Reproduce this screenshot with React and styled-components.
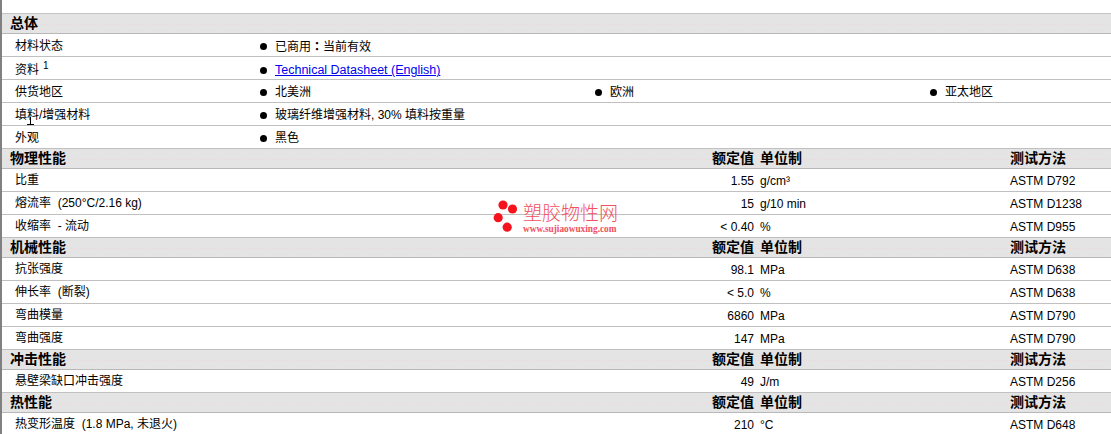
import React from 'react';
import styled, { createGlobalStyle } from 'styled-components';

const Global = createGlobalStyle`
	html, body { margin: 0; padding: 0; background: #fff; }
	body { font-family: "Liberation Sans", "Noto Sans CJK SC", sans-serif; font-size: 12px; color: #000; }
`;

const Page = styled.div`
	position: relative;
	width: 1111px;
	height: 434px;
	overflow: hidden;
	box-sizing: border-box;
	border-left: 2px solid #808080;
	padding-top: 13px;
`;

const Head = styled.div`
	display: grid;
	grid-template-columns: 600px 152px 256px 1fr;
	height: 19px;
	line-height: 19px;
	background-color: #e4e4e4;
	background-image: linear-gradient(90deg, #f0d4d8 50%, transparent 50%);
	background-size: 3px 1px;
	background-position: 0 10px;
	background-repeat: repeat-x;
	border-bottom: 1px solid #b8b8b8;
	border-top: ${p => (p.$first ? '1px solid #c4c4c4' : 'none')};
	font-weight: bold;
	font-size: 14px;
`;

const HeadTitle = styled.span`
	padding-left: 8px;
`;

const Row = styled.div`
	display: grid;
	grid-template-columns: ${p => p.$columns};
	height: 22px;
	line-height: ${p => p.$lineHeight || 22}px;
	border-bottom: 1px solid #c0c0c0;
`;

const Label = styled.span`
	padding-left: 13px;
`;

const Value = styled.span`
	text-align: right;
	padding-top: 1px;
`;

const Unit = styled.span`
	padding-left: 6px;
	padding-top: 1px;
`;

const Test = styled.span`
	padding-top: 1px;
`;

const Right = styled.span`
	text-align: right;
`;

const Indented = styled.span`
	padding-left: 6px;
`;

const Sup = styled.sup`
	font-size: 10px;
	line-height: 0;
	margin-left: 4px;
	vertical-align: 5px;
`;

const Bullet = styled.span`
	display: flex;
	align-items: center;
	gap: 8px;
	&::before {
		content: "";
		width: 7px;
		height: 7px;
		border-radius: 50%;
		background: #000;
	}
`;

const Colon = styled.span`
	font-family: "Noto Sans CJK TC", sans-serif;
	font-weight: bold;
`;

const DataLink = styled.a`
	color: #0000ee;
	font-size: 12.5px;
	text-decoration: underline;
`;

const Cursor = styled.svg`
	position: absolute;
	left: 25px;
	top: 117px;
	width: 7px;
	height: 8px;
`;

const Mark = styled.div`
	position: absolute;
	left: 491px;
	top: 199px;
	display: flex;
	gap: 3px;
	color: #f25060;
`;

const MarkText = styled.div`
	display: flex;
	flex-direction: column;
	padding-top: 5px;
`;

const MarkName = styled.span`
	font-size: 19px;
	line-height: 20px;
	font-weight: 300;
`;

const MarkUrl = styled.span`
	font-family: "Liberation Serif", serif;
	font-size: 9.3px;
	font-weight: bold;
	line-height: 10px;
	white-space: nowrap;
`;

const propCols = '258px 335px 335px 1fr';
const dataCols = '600px 152px 256px 1fr';

const PropRow = ({ label, items, lineHeight = 24 }) => (
	<Row $columns={propCols} $lineHeight={lineHeight}>
		<Label>{label}</Label>
		{items.map((item, i) => <Bullet key={i}>{item}</Bullet>)}
	</Row>
);

const DataRow = ({ label, value, unit, test }) => (
	<Row $columns={dataCols}>
		<Label>{label}</Label>
		<Value>{value}</Value>
		<Unit>{unit}</Unit>
		<Test>{test}</Test>
	</Row>
);

const DataHead = ({ title }) => (
	<Head>
		<HeadTitle>{title}</HeadTitle>
		<Right>额定值</Right>
		<Indented>单位制</Indented>
		<span>测试方法</span>
	</Head>
);

const App = () => (
	<Page>
		<Global />
		<Head $first>
			<HeadTitle>总体</HeadTitle>
		</Head>
		<PropRow label="材料状态" items={[<span>已商用<Colon>：</Colon>当前有效</span>]} />
		<PropRow
			lineHeight={26}
			label={<>资料<Sup>1</Sup></>}
			items={[<DataLink href="#">Technical Datasheet (English)</DataLink>]}
		/>
		<PropRow label="供货地区" items={['北美洲', '欧洲', '亚太地区']} />
		<PropRow label="填料/增强材料" items={['玻璃纤维增强材料, 30% 填料按重量']} />
		<PropRow label="外观" items={['黑色']} />

		<DataHead title="物理性能" />
		<DataRow label="比重" value="1.55" unit="g/cm³" test="ASTM D792" />
		<DataRow label={'熔流率\u00a0 (250°C/2.16 kg)'} value="15" unit="g/10 min" test="ASTM D1238" />
		<DataRow label={'收缩率\u00a0 - 流动'} value="< 0.40" unit="%" test="ASTM D955" />

		<DataHead title="机械性能" />
		<DataRow label="抗张强度" value="98.1" unit="MPa" test="ASTM D638" />
		<DataRow label={'伸长率\u00a0 (断裂)'} value="< 5.0" unit="%" test="ASTM D638" />
		<DataRow label="弯曲模量" value="6860" unit="MPa" test="ASTM D790" />
		<DataRow label="弯曲强度" value="147" unit="MPa" test="ASTM D790" />

		<DataHead title="冲击性能" />
		<DataRow label="悬壁梁缺口冲击强度" value="49" unit="J/m" test="ASTM D256" />

		<DataHead title="热性能" />
		<DataRow label={'热变形温度\u00a0 (1.8 MPa, 未退火)'} value="210" unit="°C" test="ASTM D648" />

		<Cursor viewBox="0 0 7 8">
			<path d="M3.5 0V7M0 7.5H7" stroke="#000" strokeWidth="1" fill="none" />
		</Cursor>
		<Mark>
			<svg width="27" height="34" viewBox="0 0 27 34">
				<circle cx="10" cy="6" r="4.6" fill="#f5141e" />
				<circle cx="19.5" cy="10" r="4.6" fill="#f5141e" />
				<circle cx="5.2" cy="18.7" r="4.6" fill="#f5141e" />
				<circle cx="14.2" cy="28.2" r="4.6" fill="#f5141e" />
			</svg>
			<MarkText>
				<MarkName>塑胶物性网</MarkName>
				<MarkUrl>www.sujiaowuxing.com</MarkUrl>
			</MarkText>
		</Mark>
	</Page>
);

export default App;
